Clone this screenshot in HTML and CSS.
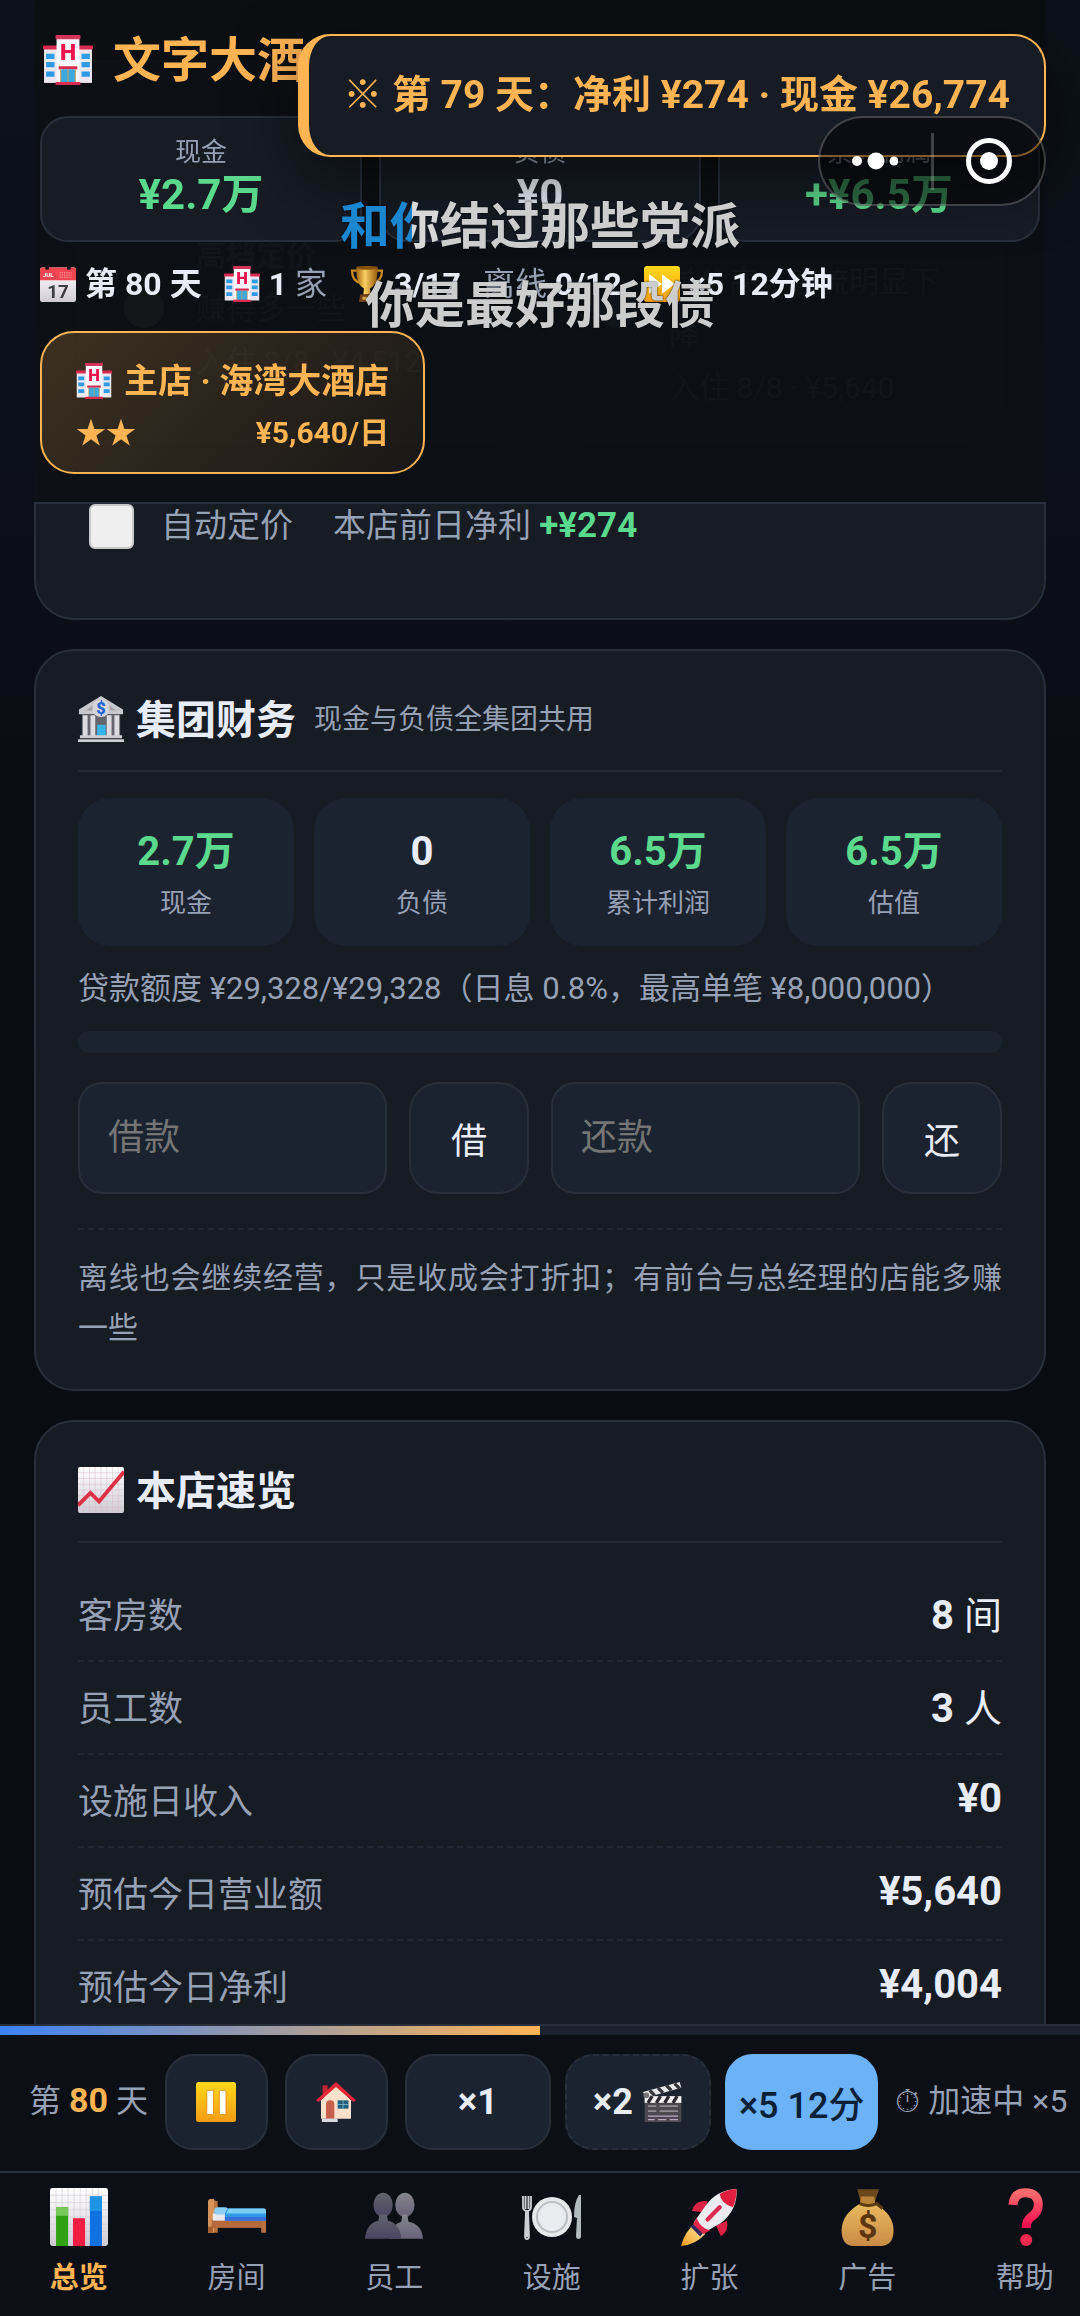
FILE: index.html
```html
<!DOCTYPE html>
<html lang="zh-CN">
<head>
    <meta charset="UTF-8">
    <meta name="viewport" content="width=device-width, initial-scale=1.0">
    <title>文字大酒店</title>
    <link rel="stylesheet" href="styles.css">
</head>
<body>

<!-- 图标库 -->
<svg class="icon-defs" width="0" height="0" aria-hidden="true">
    <defs>
        <linearGradient id="gWhite" x1="0" y1="0" x2="0" y2="1">
            <stop offset="0" stop-color="#ffffff"/>
            <stop offset="1" stop-color="#cfcbd6"/>
        </linearGradient>
        <linearGradient id="gYellow" x1="0" y1="0" x2="0" y2="1">
            <stop offset="0" stop-color="#ffd91a"/>
            <stop offset="1" stop-color="#f59c14"/>
        </linearGradient>
        <linearGradient id="gGold" x1="0" y1="0" x2="1" y2="0">
            <stop offset="0" stop-color="#a8650c"/>
            <stop offset="0.4" stop-color="#f8cf62"/>
            <stop offset="1" stop-color="#9a5a0a"/>
        </linearGradient>
        <linearGradient id="gBag" x1="0" y1="0" x2="0" y2="1">
            <stop offset="0" stop-color="#e9b95e"/>
            <stop offset="1" stop-color="#c98a45"/>
        </linearGradient>
        <linearGradient id="gRed" x1="0" y1="0" x2="0" y2="1">
            <stop offset="0" stop-color="#fb6a6c"/>
            <stop offset="1" stop-color="#f5074f"/>
        </linearGradient>
        <linearGradient id="gMan" x1="0" y1="0" x2="0" y2="1">
            <stop offset="0" stop-color="#62626c"/>
            <stop offset="1" stop-color="#4b4562"/>
        </linearGradient>
        <linearGradient id="gManBack" x1="0" y1="0" x2="0" y2="1">
            <stop offset="0" stop-color="#85858c"/>
            <stop offset="1" stop-color="#68627a"/>
        </linearGradient>
        <linearGradient id="gFlame" x1="1" y1="0" x2="0" y2="1">
            <stop offset="0" stop-color="#fff3b8"/>
            <stop offset="1" stop-color="#f59a1c"/>
        </linearGradient>
    </defs>

    <symbol id="i-hotel" viewBox="0 0 48 48">
        <rect x="1" y="11" width="14" height="35" fill="#ece6ee"/>
        <rect x="33" y="11" width="14" height="35" fill="#ece6ee"/>
        <rect x="0" y="10" width="14" height="4" rx="1" fill="#d92b50"/>
        <rect x="34" y="10" width="14" height="4" rx="1" fill="#d92b50"/>
        <path d="M3 18h8v5H3zM3 26h8v5H3zM3 35h8v5H3zM37 18h8v5h-8zM37 26h8v5h-8zM37 35h8v5h-8z" fill="#2d9ae6"/>
        <rect x="13" y="3" width="22" height="43" fill="#faf7fa"/>
        <rect x="12" y="0" width="24" height="4" rx="1" fill="#d4345a"/>
        <text x="24" y="24" text-anchor="middle" font-family="Roboto, sans-serif" font-weight="900" font-size="22" fill="#ec1450">H</text>
        <rect x="15" y="30" width="18" height="3" fill="#d92b50"/>
        <rect x="17" y="33" width="14" height="13" fill="#3aa9df"/>
        <path d="M17 33v13M24 33v13M31 33v13" stroke="#c9a04f" stroke-width="1"/>
        <rect x="12" y="45" width="24" height="3" rx="1" fill="#d92b50"/>
    </symbol>

    <symbol id="i-calendar" viewBox="0 0 48 48">
        <rect x="0" y="2" width="48" height="46" rx="3" fill="url(#gWhite)"/>
        <path d="M0 19V5q0-3 3-3h42q3 0 3 3v14z" fill="#ef4550"/>
        <rect x="7" y="0" width="5" height="5" rx="2" fill="#1a1418"/>
        <rect x="36" y="0" width="5" height="5" rx="2" fill="#1a1418"/>
        <text x="4" y="15" font-family="Roboto, sans-serif" font-weight="700" font-size="8" fill="#ffffff">JUL</text>
        <path d="M26 9h16M26 12h16M26 15h16" stroke="#f9a3a6" stroke-width="1.4" stroke-dasharray="1.6 1.4"/>
        <text x="24" y="43" text-anchor="middle" font-family="Roboto, sans-serif" font-weight="700" font-size="25" fill="#3c3c44">17</text>
    </symbol>

    <symbol id="i-trophy" viewBox="0 0 48 48">
        <path d="M11 6H4q0 14 12 17M37 6h7q0 14-12 17" fill="none" stroke="#c98a1e" stroke-width="3"/>
        <path d="M10 1h28q1 24-10 29l1 8H19l1-8Q9 25 10 1z" fill="url(#gGold)"/>
        <ellipse cx="24" cy="2.5" rx="14" ry="2.5" fill="#8a5208"/>
        <path d="M15 38h18l2 10H13z" fill="#6e3d1c"/>
        <rect x="18" y="41" width="12" height="4" fill="#e0ac48"/>
    </symbol>

    <symbol id="i-fast" viewBox="0 0 48 48">
        <rect width="48" height="48" rx="4" fill="url(#gYellow)"/>
        <path d="M7 11l17 13L7 37zM24 11l17 13-17 13z" fill="#ffffff"/>
    </symbol>

    <symbol id="i-pause" viewBox="0 0 48 48">
        <rect width="48" height="48" rx="3" fill="url(#gYellow)"/>
        <rect x="13" y="10" width="8" height="29" rx="1" fill="#ffffff" stroke="#e08a12" stroke-width="1"/>
        <rect x="28" y="10" width="8" height="29" rx="1" fill="#ffffff" stroke="#e08a12" stroke-width="1"/>
    </symbol>

    <symbol id="i-bank" viewBox="0 0 48 48">
        <path d="M24 0l23 14v5H1v-5z" fill="#c9c8cc"/>
        <path d="M24 4l16 11H8z" fill="#a4a3a8"/>
        <path d="M4 19h40v23H4z" fill="#66656d"/>
        <path d="M5 20h5v22H5zM13 20h5v22h-5zM30 20h5v22h-5zM38 20h5v22h-5z" fill="#dcdbe0"/>
        <rect x="20" y="30" width="9" height="12" fill="#37b4e6"/>
        <path d="M2 41h44v3H2zM0 45h48v3H0z" fill="#cfcdd4"/>
        <circle cx="24" cy="13" r="9" fill="#d6d5da"/>
        <text x="24" y="19" text-anchor="middle" font-family="Roboto, sans-serif" font-weight="900" font-size="17" fill="#2464d8">$</text>
    </symbol>

    <symbol id="i-chart" viewBox="0 0 48 48">
        <rect width="48" height="48" rx="2" fill="url(#gWhite)"/>
        <path d="M6 0v48M12 0v48M18 0v48M24 0v48M30 0v48M36 0v48M42 0v48M0 6h48M0 12h48M0 18h48M0 24h48M0 30h48M0 36h48M0 42h48" stroke="#d9bcc6" stroke-width="0.5"/>
        <path d="M0 40l13-13 9 9L48 5" fill="none" stroke="#dc3145" stroke-width="4"/>
    </symbol>

    <symbol id="i-house" viewBox="0 0 48 48">
        <rect x="8" y="4" width="6" height="14" fill="#c4252e"/>
        <path d="M24 4l18 18v22H6V22z" fill="#fbe0cb"/>
        <path d="M24 0l24 22-3 2L24 6 3 24l-3-2z" fill="#e32636"/>
        <path d="M12 44V27q0-5 5-5t5 5v17z" fill="#c65f4c"/>
        <rect x="26" y="22" width="13" height="10" fill="#1f5f7e"/>
        <path d="M32.500 22v10M26 27h13" stroke="#79b8cc" stroke-width="1"/>
        <rect x="7" y="44" width="19" height="4" fill="#d6dbe4"/>
    </symbol>

    <symbol id="i-clapper" viewBox="0 0 48 48">
        <path d="M0 12L44 0l2 7L3 19z" fill="#e8e8ea"/>
        <path d="M8 10l6 6M18 7l6 6M28 4l6 6M38 2l6 6" stroke="#37343a" stroke-width="4"/>
        <rect x="2" y="17" width="44" height="31" rx="1" fill="#4c4852"/>
        <rect x="2" y="17" width="44" height="8" fill="#f4f4f4"/>
        <path d="M6 25l5-8M16 25l5-8M26 25l5-8M36 25l5-8" stroke="#2c2a30" stroke-width="4"/>
        <path d="M6 29h10M20 29h22M6 35h10M20 35h22" stroke="#8e8a94" stroke-width="2"/>
        <path d="M6 41h36M6 45h8M18 45h10M32 45h10" stroke="#b9a6c9" stroke-width="1.500"/>
        <circle cx="4" cy="16" r="3.500" fill="#77747c"/>
    </symbol>

    <symbol id="i-bars" viewBox="0 0 48 48">
        <rect width="48" height="48" rx="2" fill="url(#gWhite)"/>
        <path d="M5 0v48M10 0v48M15 0v48M20 0v48M25 0v48M30 0v48M35 0v48M40 0v48M0 6h48M0 12h48M0 18h48M0 24h48M0 30h48M0 36h48M0 42h48" stroke="#d0ccd4" stroke-width="0.5"/>
        <rect x="5" y="16" width="10" height="32" fill="#2fa312"/>
        <rect x="5" y="16" width="10" height="7" fill="#78c85a"/>
        <rect x="19" y="25" width="10" height="23" fill="#f21d42"/>
        <rect x="33" y="7" width="10" height="41" fill="#0f72e0"/>
        <rect x="33" y="7" width="10" height="12" fill="#1f93e4"/>
    </symbol>

    <symbol id="i-bed" viewBox="0 0 48 48">
        <path d="M0 11q0-2 2-2l6 2v26H0z" fill="#b8733f"/>
        <path d="M2 9h3v28H0V11z" fill="#d6945a"/>
        <rect x="3" y="26" width="45" height="7" fill="#b46a3a"/>
        <rect x="0" y="32" width="4" height="5" fill="#a55f30"/>
        <rect x="44" y="26" width="4" height="11" fill="#b87040"/>
        <rect x="4" y="21" width="12" height="6" fill="#e9e8ee"/>
        <rect x="5" y="16" width="12" height="6" rx="3" fill="#8ecdf5"/>
        <path d="M16 17h30q2 0 2 2v8H14v-6z" fill="#2e9ae8"/>
        <path d="M17 17h29q2 0 2 2v2H15z" fill="#7dd0f3"/>
        <path d="M14 24h34v3H14z" fill="#3a6fd8"/>
    </symbol>

    <symbol id="i-staff" viewBox="0 0 48 48">
        <ellipse cx="33" cy="14" rx="8" ry="10" fill="url(#gManBack)"/>
        <path d="M20 42q2-12 10-14l1-6h4l1 6q11 2 12 14z" fill="url(#gManBack)"/>
        <ellipse cx="15" cy="14" rx="8" ry="10" fill="url(#gMan)"/>
        <path d="M0 42q1-13 11-15l1-5h6l1 5q10 2 11 15z" fill="url(#gMan)"/>
    </symbol>

    <symbol id="i-dish" viewBox="0 0 62 48">
        <circle cx="31" cy="24" r="20" fill="#e6e8ea"/>
        <circle cx="31" cy="24" r="16" fill="#b9bec3"/>
        <circle cx="31" cy="24" r="14" fill="#e9ecee"/>
        <path d="M2 3v11q0 3 3 4l-1 25q0 3 2 3t2-3L7 18q3-1 3-4V3" fill="none" stroke="#ccd0d6" stroke-width="1.800"/>
        <path d="M4.500 3v13M7.500 3v13M6 17v27" stroke="#ccd0d6" stroke-width="2"/>
        <path d="M58 2q-5 7-5 22l3 1-1 18q0 3 2.500 3t2.500-3V2z" fill="#b4bac2"/>
    </symbol>

    <symbol id="i-rocket" viewBox="0 0 48 48">
        <path d="M17 32l-4-4Q3 36 0 48q12-1 20-10z" fill="url(#gFlame)"/>
        <path d="M22 11q-10-2-13 8l10 1zM38 27q2 8-5 13l-4-9z" fill="#dc2345"/>
        <path d="M46 1q-16 0-26 14L11 28q1 6 8 9l14-8Q47 18 46 1z" fill="#ecebf0"/>
        <path d="M46 1q-8 0-14 4 1 8 11 11Q46 9 46 1z" fill="#e01f3e"/>
        <path d="M13 25l-3 5q2 6 9 8l5-3q-8-2-11-10z" fill="#e3264a"/>
        <path d="M32 16L22 26" stroke="#d92c50" stroke-width="3.500" stroke-linecap="round"/>
        <path d="M9 31l8 8" stroke="#2f2a5e" stroke-width="3"/>
    </symbol>

    <symbol id="i-money" viewBox="0 0 48 48">
        <path d="M16 1h18l-4 12H19z" fill="#6a481c"/>
        <path d="M19 7h11l1 8H18z" fill="#b98338"/>
        <path d="M18 13h13q15 9 15 22 0 13-11 13H13Q3 48 3 35q0-13 15-22z" fill="url(#gBag)"/>
        <path d="M18 13q7 3 14 0l5 4" fill="none" stroke="#5a3a12" stroke-width="2.500"/>
        <text x="24.500" y="41" text-anchor="middle" font-family="Roboto, sans-serif" font-weight="700" font-size="28" fill="#5b3410">$</text>
    </symbol>

    <symbol id="i-help" viewBox="0 0 48 48">
        <path d="M14 14Q15 4 24 4q11 0 11 10 0 6-6 10-4 3-4 9" fill="none" stroke="url(#gRed)" stroke-width="7.500" stroke-linecap="butt"/>
        <circle cx="25" cy="43" r="5" fill="#f8284f"/>
    </symbol>
</svg>

<header class="topbar">
    <h1 class="brand">
        <svg class="icon icon-50"><use href="#i-hotel"/></svg>
        文字大酒店
    </h1>

    <div class="top-stats">
        <div class="top-stat">
            <span class="top-label">现金</span>
            <strong class="top-value good">¥2.7万</strong>
        </div>
        <div class="top-stat">
            <span class="top-label">负债</span>
            <strong class="top-value">¥0</strong>
        </div>
        <div class="top-stat">
            <span class="top-label">累计利润</span>
            <strong class="top-value good">+¥6.5万</strong>
        </div>
    </div>

    <div class="meta-row">
        <span class="meta"><svg class="icon icon-36"><use href="#i-calendar"/></svg><b>第 80 天</b></span>
        <span class="meta"><svg class="icon icon-36"><use href="#i-hotel"/></svg><span><b>1</b> 家</span></span>
        <span class="meta"><svg class="icon icon-36"><use href="#i-trophy"/></svg><b>3/17</b></span>
        <span class="meta"><span>离线 <b>0/12</b></span></span>
        <span class="meta"><svg class="icon icon-36"><use href="#i-fast"/></svg><b>×5 12分钟</b></span>
    </div>

    <button type="button" class="store-chip">
        <span class="store-name"><svg class="icon icon-36"><use href="#i-hotel"/></svg>主店 · 海湾大酒店</span>
        <span class="store-info"><span>★★</span><span>¥5,640/日</span></span>
    </button>
</header>

<main class="content">
    <section class="card price-card">
        <div class="price-options">
            <label class="price-option">
                <input type="radio" name="price" class="price-radio">
                <span>
                    <strong>高档定价</strong><br>
                    赚得多一些<br>
                    入住 8/8 · ¥4,512
                </span>
            </label>
            <label class="price-option">
                <input type="radio" name="price" class="price-radio" checked>
                <span>
                    <strong>豪华定价</strong><br>
                    单价高，客流明显下降<br>
                    入住 8/8 · ¥5,640
                </span>
            </label>
        </div>
        <div class="auto-row">
            <label class="auto-label"><input type="checkbox" class="auto-check">自动定价</label>
            <span>本店前日净利 <b class="good">+¥274</b></span>
        </div>
    </section>

    <section class="card">
        <h2 class="card-title">
            <svg class="icon icon-46"><use href="#i-bank"/></svg>
            集团财务
            <small>现金与负债全集团共用</small>
        </h2>
        <div class="stat-grid">
            <div class="stat"><strong class="good">2.7万</strong><span>现金</span></div>
            <div class="stat"><strong>0</strong><span>负债</span></div>
            <div class="stat"><strong class="good">6.5万</strong><span>累计利润</span></div>
            <div class="stat"><strong class="good">6.5万</strong><span>估值</span></div>
        </div>
        <p class="loan-text">贷款额度 ¥29,328/¥29,328（日息 0.8%，最高单笔 ¥8,000,000）</p>
        <div class="loan-bar"></div>
        <form class="loan-form">
            <input type="text" class="loan-input" placeholder="借款" aria-label="借款">
            <button type="button" class="loan-btn">借</button>
            <input type="text" class="loan-input" placeholder="还款" aria-label="还款">
            <button type="button" class="loan-btn">还</button>
        </form>
        <p class="tip">离线也会继续经营，只是收成会打折扣；有前台与总经理的店能多赚一些</p>
    </section>

    <section class="card">
        <h2 class="card-title">
            <svg class="icon icon-46"><use href="#i-chart"/></svg>
            本店速览
        </h2>
        <dl class="overview">
            <div class="row"><dt>客房数</dt><dd>8 <span>间</span></dd></div>
            <div class="row"><dt>员工数</dt><dd>3 <span>人</span></dd></div>
            <div class="row"><dt>设施日收入</dt><dd>¥0</dd></div>
            <div class="row"><dt>预估今日营业额</dt><dd>¥5,640</dd></div>
            <div class="row"><dt>预估今日净利</dt><dd>¥4,004</dd></div>
        </dl>
    </section>
</main>

<footer class="bottom">
    <div class="day-progress"><div class="day-fill" style="width: 50%"></div></div>
    <div class="controls">
        <span class="day">第 <b>80</b> 天</span>
        <button type="button" class="ctl ctl-icon" aria-label="暂停"><svg class="icon icon-40"><use href="#i-pause"/></svg></button>
        <button type="button" class="ctl ctl-icon" aria-label="主店"><svg class="icon icon-40"><use href="#i-house"/></svg></button>
        <div class="speeds">
            <button type="button" class="ctl">×1</button>
            <button type="button" class="ctl ctl-ad">×2 <svg class="icon icon-40"><use href="#i-clapper"/></svg></button>
            <button type="button" class="ctl ctl-active">×5 12分</button>
        </div>
        <span class="speed-note">⏱ 加速中 ×5</span>
    </div>
    <nav class="tabs">
        <a href="#" class="tab active"><svg class="icon icon-58"><use href="#i-bars"/></svg>总览</a>
        <a href="#" class="tab"><svg class="icon icon-62"><use href="#i-bed"/></svg>房间</a>
        <a href="#" class="tab"><svg class="icon icon-58"><use href="#i-staff"/></svg>员工</a>
        <a href="#" class="tab"><svg class="icon icon-62"><use href="#i-dish"/></svg>设施</a>
        <a href="#" class="tab"><svg class="icon icon-58"><use href="#i-rocket"/></svg>扩张</a>
        <a href="#" class="tab"><svg class="icon icon-62"><use href="#i-money"/></svg>广告</a>
        <a href="#" class="tab"><svg class="icon icon-58"><use href="#i-help"/></svg>帮助</a>
    </nav>
</footer>

<!-- 浮层：提示、胶囊按钮、歌词 -->
<div class="toast" role="status">※ 第 79 天：净利 ¥274 · 现金 ¥26,774</div>

<div class="capsule">
    <button type="button" class="capsule-btn" aria-label="更多">
        <svg width="46" height="24" viewBox="0 0 46 24" fill="#ffffff"><circle cx="5" cy="12" r="5"/><circle cx="24" cy="12" r="8.500"/><circle cx="42" cy="12" r="4.500"/></svg>
    </button>
    <button type="button" class="capsule-btn" aria-label="关闭">
        <svg width="48" height="48" viewBox="0 0 48 48"><circle cx="24" cy="24" r="20.500" fill="none" stroke="#ffffff" stroke-width="5"/><circle cx="24" cy="24" r="9" fill="#ffffff"/></svg>
    </button>
</div>

<div class="lyrics">
    <p><span class="sung">和</span><span class="singing">你</span>结过那些党派</p>
    <p>你是最好那段债</p>
</div>

</body>
</html>
```
FILE: styles.css
```css
* {
    margin: 0;
    padding: 0;
    box-sizing: border-box;
}

:root {
    --card: #161b24;
    --tile: #1c2330;
    --line: #282e3a;
    --line-soft: #222834;
    --text: #e8ecf6;
    --muted: #97a1b5;
    --gold: #ffb454;
    --good: #5bd98c;
    --blue: #6cb2f8;
}

body {
    height: 100vh;
    overflow: hidden;
    background: linear-gradient(180deg, #0d1119, #0a0c14 50%, #090b0f);
    color: var(--text);
    font-family: Roboto, "Noto Sans CJK SC", sans-serif;
    font-size: 34px;
}

button,
input {
    font-family: inherit;
    color: inherit;
}

.icon-defs {
    position: absolute;
}

.icon {
    flex: none;
    display: block;
}

.icon-36 { width: 36px; height: 36px; }
.icon-40 { width: 40px; height: 40px; }
.icon-46 { width: 46px; height: 46px; }
.icon-50 { width: 50px; height: 50px; }
.icon-58 { width: 58px; height: 58px; }
.icon-62 { width: 62px; height: 62px; }

.good {
    color: var(--good);
}

/* 顶部栏 */
.topbar {
    position: fixed;
    top: 0;
    left: 34px;
    right: 34px;
    z-index: 10;
    padding: 24px 6px 28px;
    background: rgba(12, 15, 19, 0.97);
    border-bottom: 2px solid var(--line);
}

.brand {
    display: flex;
    align-items: center;
    gap: 20px;
    padding-left: 3px;
    padding-bottom: 8px;
    height: 72px;
    color: var(--gold);
    font-size: 48px;
    font-weight: 700;
}

.brand .icon {
    margin-top: 8px;
}

.top-stats {
    display: grid;
    grid-template-columns: repeat(3, 1fr);
    gap: 17px;
    margin-top: 20px;
}

.top-stat {
    display: flex;
    flex-direction: column;
    align-items: center;
    height: 126px;
    padding-top: 14px;
    background: var(--card);
    border: 2px solid var(--line);
    border-radius: 28px;
}

.top-label {
    color: var(--muted);
    font-size: 26px;
    line-height: 40px;
}

.top-value {
    font-size: 42px;
    line-height: 46px;
}

.meta-row {
    display: flex;
    gap: 22px;
    margin-top: 20px;
    height: 44px;
    color: var(--muted);
    font-size: 32px;
    line-height: 44px;
    white-space: nowrap;
}

.meta {
    display: flex;
    align-items: center;
    gap: 9px;
}

.meta b {
    color: var(--text);
}

.store-chip {
    display: block;
    min-width: 383px;
    height: 143px;
    margin-top: 25px;
    padding: 8px 34px 0;
    background: linear-gradient(135deg, rgba(255, 180, 84, 0.2), rgba(255, 180, 84, 0.05));
    border: 2px solid var(--gold);
    border-radius: 34px;
    color: var(--gold);
    font-size: 34px;
    font-weight: 700;
}

.store-name {
    display: flex;
    align-items: center;
    gap: 12px;
    line-height: 52px;
}

.store-info {
    display: flex;
    justify-content: space-between;
    font-size: 30px;
    line-height: 52px;
}

/* 内容卡片 */
.content {
    display: flex;
    flex-direction: column;
    gap: 29px;
    padding: 60px 34px 0;
}

.card {
    padding: 36px 42px;
    background: var(--card);
    border: 2px solid var(--line);
    border-radius: 40px;
}

.price-card {
    height: 560px;
}

.price-options {
    display: grid;
    grid-template-columns: repeat(2, minmax(0, 1fr));
    gap: 22px;
    margin-top: 76px;
    height: 268px;
}

.price-option {
    display: flex;
    align-items: center;
    gap: 32px;
    padding: 0 44px;
    border: 2px solid var(--line);
    border-radius: 28px;
    color: var(--muted);
    font-size: 30px;
    line-height: 53px;
}

.price-radio {
    appearance: none;
    flex: none;
    width: 40px;
    height: 40px;
    border-radius: 50%;
    background: #efefef;
}

.price-radio:checked {
    background: var(--blue);
}

.auto-row {
    display: flex;
    align-items: center;
    gap: 40px;
    margin-top: 58px;
    padding-left: 11px;
    color: var(--muted);
    font-size: 33px;
    line-height: 52px;
}

.auto-label {
    display: flex;
    align-items: center;
    gap: 27px;
}

.auto-check {
    appearance: none;
    width: 45px;
    height: 45px;
    background: #efefef;
    border: 2px solid #c9c9c9;
    border-radius: 6px;
}

.auto-row b {
    font-size: 35px;
    font-weight: 700;
}

.card-title {
    display: flex;
    align-items: center;
    gap: 12px;
    height: 85px;
    padding-bottom: 24px;
    border-bottom: 2px solid var(--line-soft);
    font-size: 40px;
    font-weight: 700;
}

.card-title .icon {
    margin-top: 4px;
}

.card-title small {
    margin-left: 6px;
    color: var(--muted);
    font-size: 28px;
    font-weight: 400;
}

.stat-grid {
    display: grid;
    grid-template-columns: repeat(4, 1fr);
    gap: 20px;
    margin-top: 26px;
}

.stat {
    display: flex;
    flex-direction: column;
    align-items: center;
    padding: 28px 0 18px;
    background: var(--tile);
    border-radius: 32px;
}

.stat strong {
    font-size: 40px;
    line-height: 52px;
}

.stat span {
    color: var(--muted);
    font-size: 26px;
    line-height: 50px;
}

.loan-text {
    margin-top: 17px;
    color: var(--muted);
    font-size: 31px;
    line-height: 52px;
}

.loan-bar {
    height: 22px;
    margin-top: 16px;
    background: var(--tile);
    border-radius: 11px;
}

.loan-form {
    display: grid;
    grid-template-columns: 1fr 120px 1fr 120px;
    gap: 22px;
    margin-top: 29px;
}

.loan-input,
.loan-btn {
    height: 112px;
    background: var(--tile);
    border: 2px solid var(--line);
    font-size: 36px;
}

.loan-input {
    width: 100%;
    min-width: 0;
    padding: 0 28px;
    border-radius: 24px;
}

.loan-input::placeholder {
    color: #757575;
}

.loan-btn {
    border-radius: 30px;
}

.tip {
    margin-top: 34px;
    padding-top: 23px;
    border-top: 2px dashed var(--line-soft);
    color: var(--muted);
    font-size: 30px;
    line-height: 50px;
    text-align: justify;
}

.overview {
    padding-top: 26px;
}

.row {
    display: flex;
    align-items: center;
    justify-content: space-between;
    height: 93px;
    padding-bottom: 4px;
    border-bottom: 2px dashed var(--line-soft);
}

.row dt {
    color: var(--muted);
    font-size: 35px;
}

.row dd {
    font-size: 40px;
    font-weight: 700;
}

.row dd span {
    font-size: 38px;
    font-weight: 400;
}

/* 底部 */
.bottom {
    position: fixed;
    left: 0;
    right: 0;
    bottom: 0;
    z-index: 10;
    background: #0c0f15;
    border-top: 2px solid var(--line);
}

.day-progress {
    height: 9px;
    background: var(--tile);
}

.day-fill {
    height: 100%;
    background: linear-gradient(90deg, #3b82f6, var(--gold));
}

.controls {
    display: flex;
    align-items: center;
    gap: 17px;
    padding: 19px 0 21px 29px;
    overflow: hidden;
    white-space: nowrap;
}

.day,
.speed-note {
    flex: none;
    padding-bottom: 8px;
    color: var(--muted);
    font-size: 32px;
}

.day b {
    color: var(--gold);
    font-size: 34px;
}

.speeds {
    display: flex;
    flex: none;
    gap: 14px;
}

.ctl {
    display: flex;
    flex: none;
    align-items: center;
    justify-content: center;
    gap: 10px;
    min-width: 146px;
    height: 96px;
    padding: 0 12px;
    background: var(--tile);
    border: 2px solid var(--line);
    border-radius: 28px;
    font-size: 36px;
    font-weight: 700;
}

.ctl-icon {
    min-width: 103px;
}

.ctl-ad {
    border-style: dashed;
}

.ctl-active {
    background: var(--blue);
    border-color: var(--blue);
    color: #0a2036;
    font-weight: 500;
}

.tabs {
    display: flex;
    overflow: hidden;
    border-top: 2px solid var(--line);
}

.tab {
    display: flex;
    flex: none;
    flex-direction: column;
    align-items: center;
    justify-content: flex-end;
    width: 14.6%;
    height: 143px;
    padding-bottom: 14px;
    color: var(--muted);
    font-size: 29px;
    line-height: 48px;
    text-decoration: none;
}

.tab .icon {
    height: 58px;
    margin-bottom: 8px;
}

.tab.active {
    color: var(--gold);
    font-weight: 700;
}

/* 浮层 */
.toast {
    position: fixed;
    top: 34px;
    right: 34px;
    z-index: 20;
    height: 123px;
    padding: 0 34px;
    background: var(--card);
    border: 2px solid var(--gold);
    border-left-width: 11px;
    border-radius: 32px;
    box-shadow: 0 22px 66px rgba(0, 0, 0, 0.5);
    color: var(--gold);
    font-size: 39px;
    font-weight: 700;
    line-height: 119px;
    white-space: nowrap;
}

.capsule {
    position: fixed;
    top: 116px;
    right: 34px;
    z-index: 30;
    display: flex;
    align-items: center;
    width: 228px;
    height: 90px;
    background: rgba(0, 0, 0, 0.5);
    border: 2px solid rgba(255, 255, 255, 0.22);
    border-radius: 45px;
}

.capsule-btn {
    display: flex;
    flex: 1;
    align-items: center;
    justify-content: center;
    height: 57px;
    background: none;
    border: none;
}

.capsule-btn + .capsule-btn {
    border-left: 3px solid rgba(255, 255, 255, 0.22);
}

.lyrics {
    position: fixed;
    top: 188px;
    left: 0;
    right: 0;
    z-index: 40;
    color: rgba(216, 216, 216, 0.95);
    font-size: 50px;
    font-weight: 700;
    line-height: 79px;
    text-align: center;
    text-shadow: 0 0 2px #000000;
    pointer-events: none;
}

.sung {
    color: #1b87d0;
}

.singing {
    background: linear-gradient(90deg, #1b87d0 45%, #d8d8d8 45%);
    background-clip: text;
    color: transparent;
    text-shadow: none;
}
```
